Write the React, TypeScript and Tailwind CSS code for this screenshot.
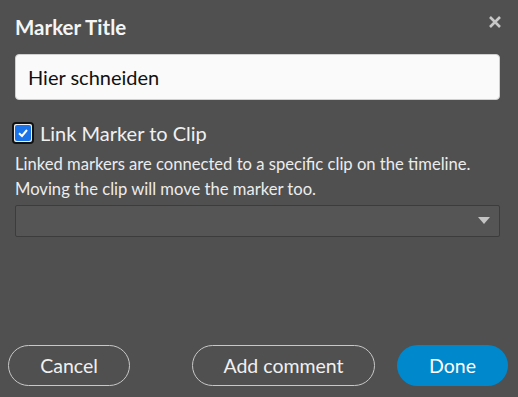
import React from "react";

export default function App() {
  return (
    <div
      className="w-[518px] h-[397px] bg-[#505050] flex flex-col text-white relative overflow-hidden"
      style={{ fontFamily: "Lato, 'Open Sans', sans-serif" }}
    >
      <button className="absolute right-[15px] top-[14px] w-[16px] h-[16px] flex items-center justify-center">
        <svg width="14" height="14" viewBox="0 0 14 14">
          <path d="M2 2 L12 12 M12 2 L2 12" stroke="#c8c8c8" strokeWidth="2.6" strokeLinecap="butt" />
        </svg>
      </button>
      <div className="pl-[15px] pr-[18px] pt-[14px]">
        <div className="text-[20.5px] font-bold leading-[26px] text-[#f5f5f5]">Marker Title</div>
        <div className="mt-[14px] h-[46px] rounded-[4px] bg-[#fafafa] border border-[#d0d0d0] flex items-center px-[12px]">
          <span className="text-[20px] text-[#111]">Hier schneiden</span>
        </div>
        <div className="mt-[21px] flex items-center -ml-[3px]">
          <div className="w-[22px] h-[22px] rounded-[4px] bg-[#111] p-[2px]">
            <div className="w-full h-full rounded-[2px] bg-[#f0f0f0] p-[1px]">
              <div className="w-full h-full rounded-[2px] bg-[#1a73e8] flex items-center justify-center">
                <svg width="12" height="12" viewBox="0 0 12 12">
                  <path d="M2 6.2 L5 9 L10 3" stroke="white" strokeWidth="2" fill="none" />
                </svg>
              </div>
            </div>
          </div>
          <span className="ml-[6px] text-[20px] leading-[24px] text-[#f0f0f0]">Link Marker to Clip</span>
        </div>
        <div className="mt-[7px] text-[16.6px] leading-[25px] text-[#ececec]">
          <div>Linked markers are connected to a specific clip on the timeline.</div>
          <div>Moving the clip will move the marker too.</div>
        </div>
        <div className="mt-[3px] h-[32px] rounded-[2px] bg-[#555555] border border-[#3c3c3c] flex items-center justify-end pr-[9px]">
          <svg width="12" height="8" viewBox="0 0 12 8">
            <path d="M0 0 H12 L6 7 Z" fill="#c4c4c4" />
          </svg>
        </div>
      </div>
      <div className="mt-auto mb-[11px] flex items-center pl-[8px] pr-[10px]">
        <button className="w-[122px] h-[41px] rounded-full border border-[#c8c8c8] text-[19.5px] text-[#f0f0f0]">
          Cancel
        </button>
        <button className="ml-[62px] w-[183px] h-[41px] rounded-full border border-[#c8c8c8] text-[19.5px] text-[#f0f0f0]">
          Add comment
        </button>
        <button className="ml-auto w-[111px] h-[41px] rounded-full bg-[#0088cc] text-[19.5px] text-white">
          Done
        </button>
      </div>
    </div>
  );
}
